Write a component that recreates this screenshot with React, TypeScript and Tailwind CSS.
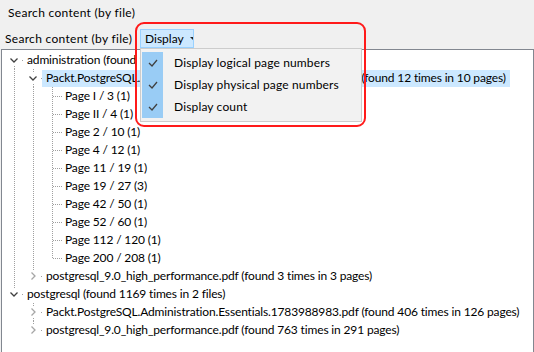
import React from "react";

type Kind = "down" | "right" | "leaf";

type Row = {
  level: number;
  kind: Kind;
  last: boolean;
  first?: boolean;
  pipes: boolean[];
  label: string;
  selected?: boolean;
};

const pages = [
  "Page I / 3 (1)",
  "Page II / 4 (1)",
  "Page 2 / 10 (1)",
  "Page 4 / 12 (1)",
  "Page 11 / 19 (1)",
  "Page 19 / 27 (3)",
  "Page 42 / 50 (1)",
  "Page 52 / 60 (1)",
  "Page 112 / 120 (1)",
  "Page 200 / 208 (1)",
];

const rows: Row[] = [
  { level: 0, kind: "down", last: false, first: true, pipes: [], label: "administration (found 15 times in 2 files)" },
  {
    level: 1,
    kind: "down",
    last: false,
    pipes: [true],
    label: "Packt.PostgreSQL.Administration.Essentials.1783988983.pdf (found 12 times in 10 pages)",
    selected: true,
  },
  ...pages.map((p, i) => ({
    level: 2,
    kind: "leaf" as Kind,
    last: i === pages.length - 1,
    pipes: [true, true],
    label: p,
  })),
  { level: 1, kind: "right", last: true, pipes: [true], label: "postgresql_9.0_high_performance.pdf (found 3 times in 3 pages)" },
  { level: 0, kind: "down", last: true, pipes: [], label: "postgresql (found 1169 times in 2 files)" },
  {
    level: 1,
    kind: "right",
    last: false,
    pipes: [false],
    label: "Packt.PostgreSQL.Administration.Essentials.1783988983.pdf (found 406 times in 126 pages)",
  },
  { level: 1, kind: "right", last: true, pipes: [false], label: "postgresql_9.0_high_performance.pdf (found 763 times in 291 pages)" },
];

const dot = { stroke: "#a0a0a0", strokeWidth: 1, strokeDasharray: "1 1" };

function PipeCell({ on }: { on: boolean }) {
  return (
    <svg width="19" height="18" className="shrink-0">
      {on && <line x1="9.5" y1="0" x2="9.5" y2="18" {...dot} />}
    </svg>
  );
}

function NodeCell({ row }: { row: Row }) {
  if (row.kind === "leaf") {
    return (
      <svg width="19" height="18" className="shrink-0">
        <line x1="9.5" y1="0" x2="9.5" y2={row.last ? 10 : 18} {...dot} />
        <line x1="10" y1="9.5" x2="19" y2="9.5" {...dot} />
      </svg>
    );
  }
  return (
    <svg width="19" height="18" className="shrink-0">
      {!row.first && <line x1="9.5" y1="0" x2="9.5" y2="4" {...dot} />}
      {!row.last && <line x1="9.5" y1="15" x2="9.5" y2="18" {...dot} />}
      <line x1="17" y1="9.5" x2="19" y2="9.5" {...dot} />
      {row.kind === "down" ? (
        <polyline points="5.5,7.5 9,11 12.5,7.5" fill="none" stroke="#404040" strokeWidth="1.3" />
      ) : (
        <polyline points="7.5,5.5 11,9 7.5,12.5" fill="none" stroke="#a6a6a6" strokeWidth="1.3" />
      )}
    </svg>
  );
}

function Check() {
  return (
    <svg width="10" height="8" viewBox="0 0 10 8">
      <polyline points="1,4 4,7 9,1" fill="none" stroke="#404040" strokeWidth="1.3" />
    </svg>
  );
}

const menuItems = ["Display logical page numbers", "Display physical page numbers", "Display count"];

export default function App() {
  return (
    <div
      className="relative w-[534px] h-[352px] overflow-hidden bg-[#f0f0f0] text-[12px] leading-[16px] text-black"
      style={{ fontFamily: 'Lato, "Noto Sans", sans-serif' }}
    >
      <div className="h-[28px] pl-[8px] pt-[5px] tracking-[0.3px]">Search content (by file)</div>

      <div className="flex h-[21px] items-center">
        <span className="w-[140px] pl-[5px] tracking-[0.3px]">Search content (by file)</span>
        <div className="flex h-[19px] w-[54px] items-center border border-[#99d1ff] bg-[#cce8ff] pl-[4px]">
          <span>Display</span>
          <svg width="7" height="4" className="ml-[6px]">
            <polygon points="0,0 7,0 3.5,3.5" fill="#222" />
          </svg>
        </div>
      </div>

      {/* tree */}
      <div className="ml-[1px] h-[310px] w-[533px] border border-[#828790] bg-white pt-[1px] pl-[3px] tracking-[-0.15px]">
        {rows.map((r, i) => (
          <div key={i} className="flex h-[18px] items-center whitespace-nowrap">
            {r.pipes.map((p, j) => (
              <PipeCell key={j} on={p} />
            ))}
            <NodeCell row={r} />
            <span
              className={
                "ml-[-1px] flex h-[17px] items-center px-[4px] " + (r.selected ? "bg-[#cce8ff]" : "")
              }
            >
              {r.label}
            </span>
          </div>
        ))}
      </div>

      {/* dropdown menu */}
      <div className="absolute left-[140px] top-[48px] w-[222px] h-[74px] border border-[#cccccc] bg-[#f2f2f2] pl-[1px] pt-[3px]">
        {menuItems.map((m) => (
          <div key={m} className="flex h-[22px] items-center">
            <div className="flex h-[22px] w-[21px] items-center justify-center bg-[#99ccf5]">
              <Check />
            </div>
            <span className="pl-[11px] tracking-[0.15px]">{m}</span>
          </div>
        ))}
      </div>

      {/* annotation */}
      <div className="absolute left-[135px] top-[22px] h-[105px] w-[231px] rounded-[9px] border-2 border-[#ff1a1a]" />
    </div>
  );
}
